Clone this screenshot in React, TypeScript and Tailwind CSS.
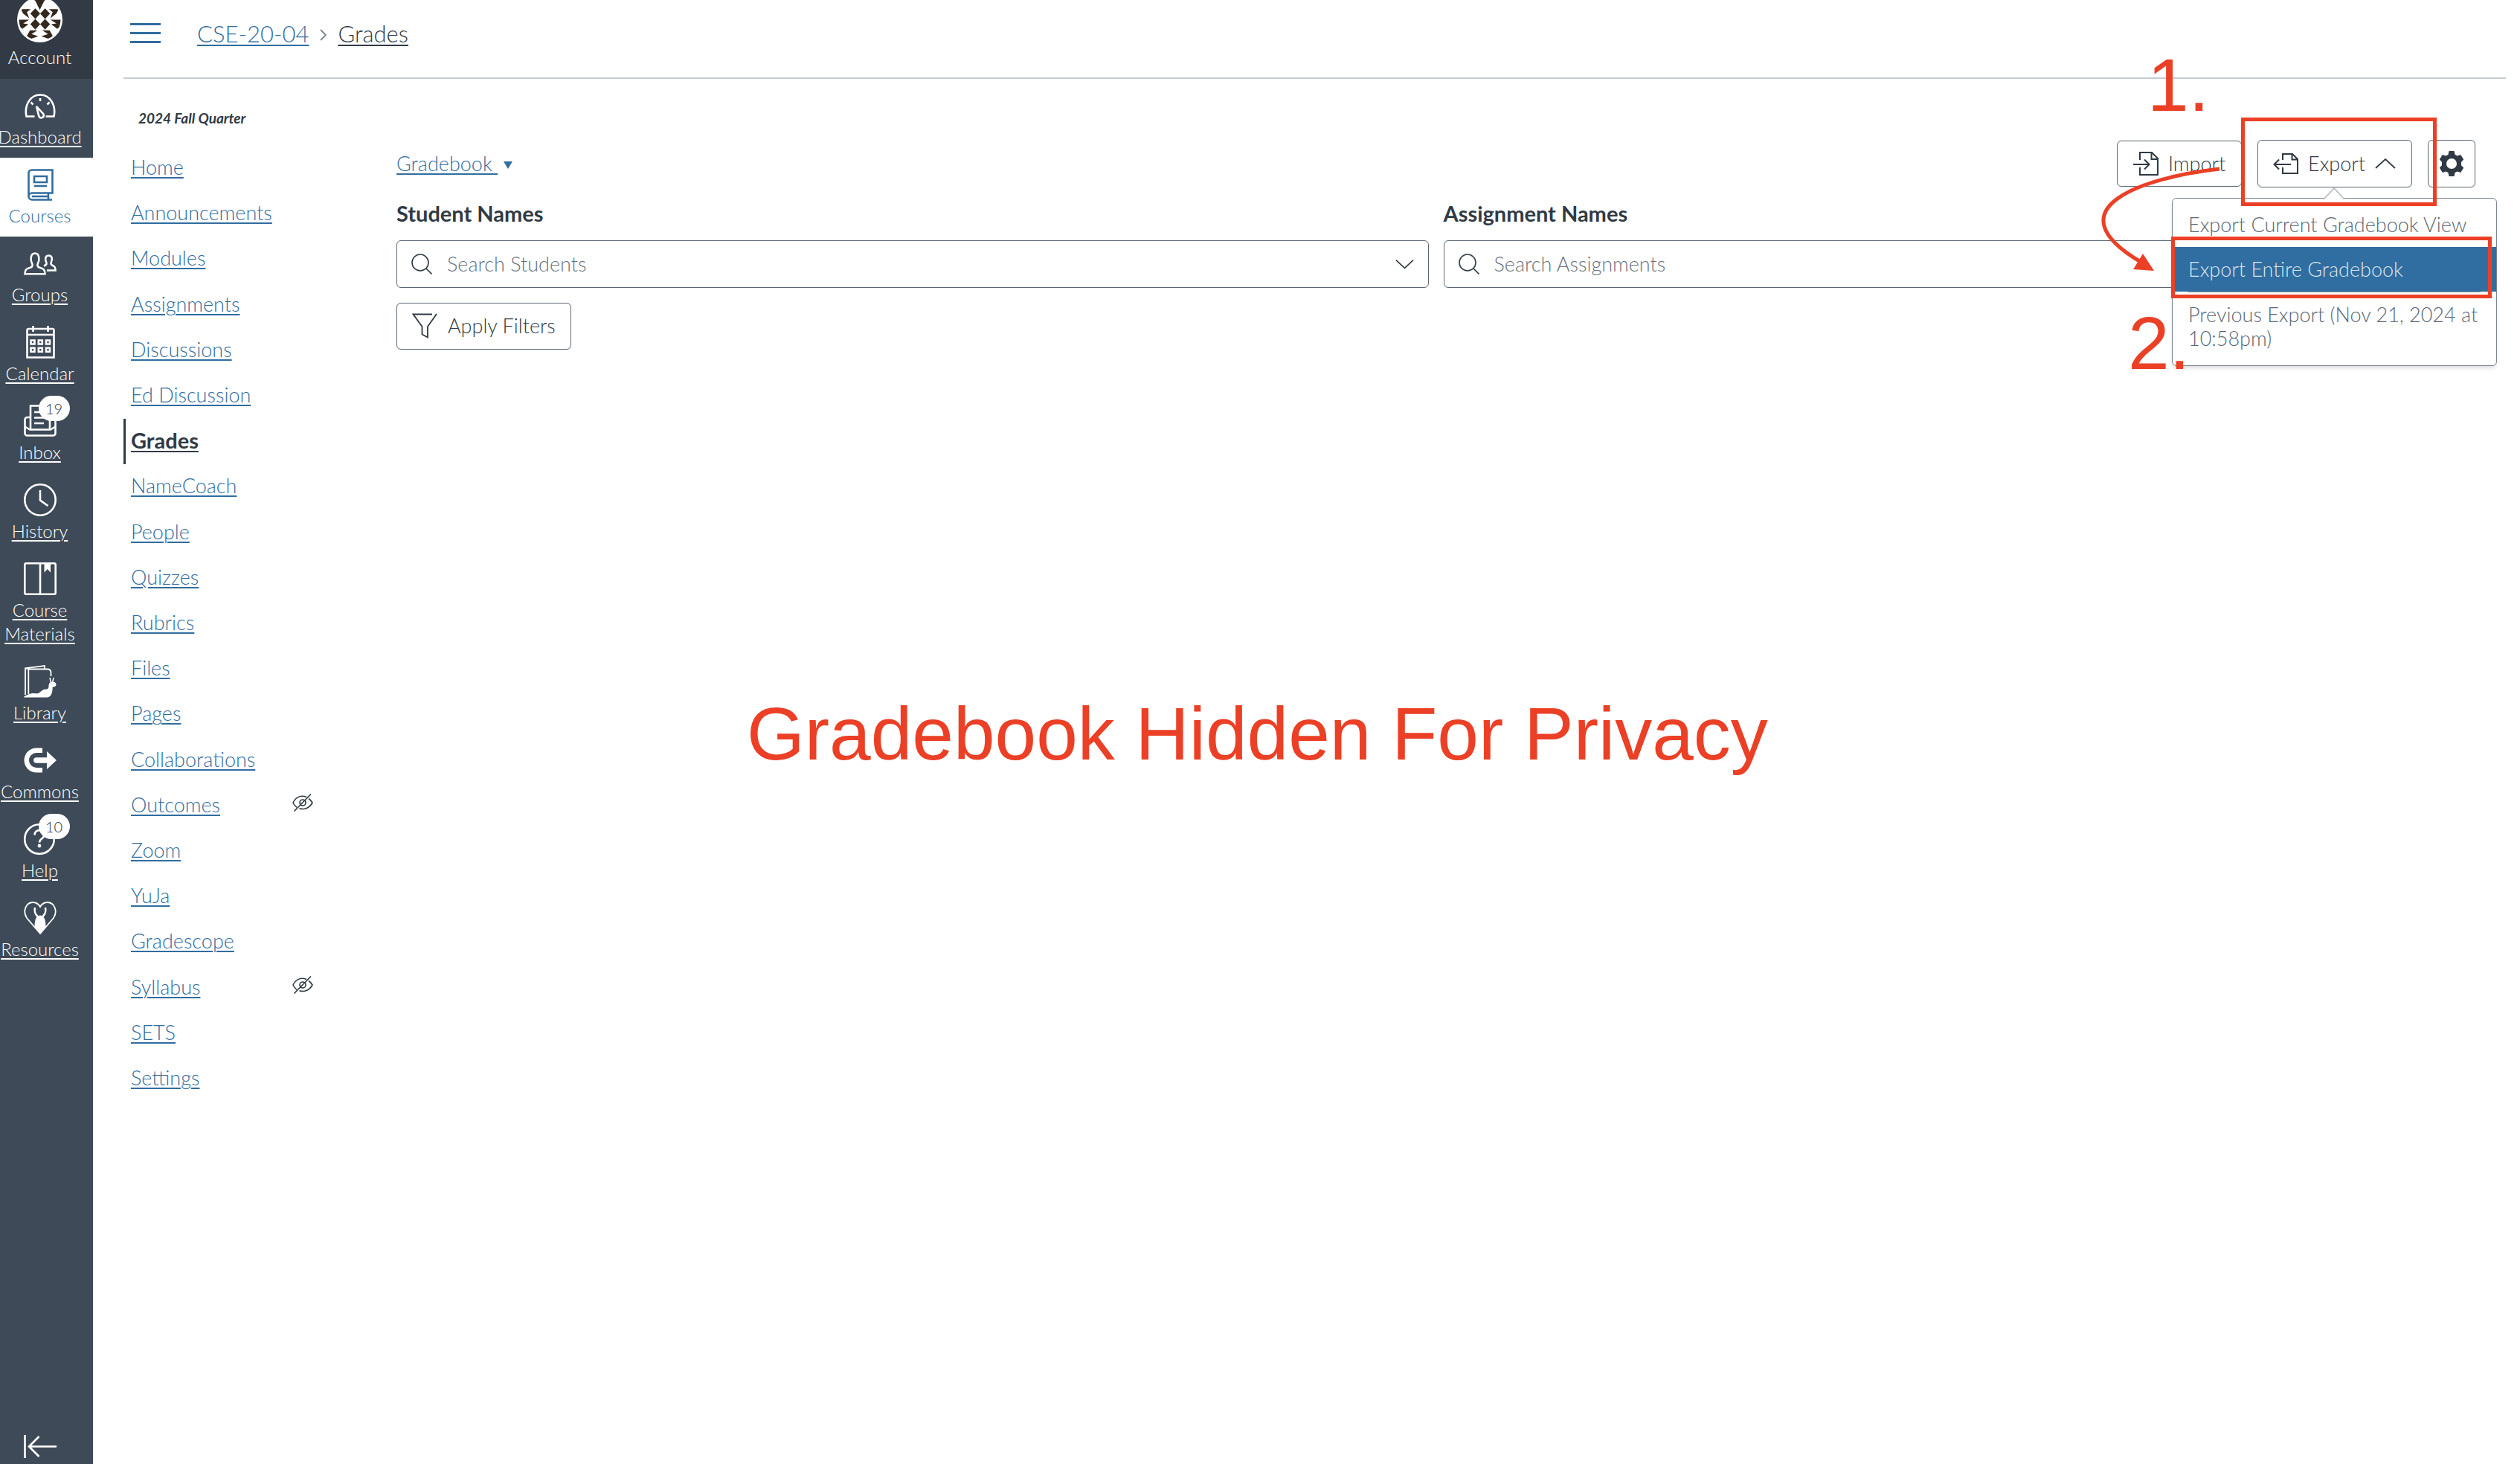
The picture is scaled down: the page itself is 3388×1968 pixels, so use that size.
import React from "react";

type IconProps = { className?: string };

const stroke = { fill: "none", stroke: "currentColor", strokeWidth: 2.6 } as const;

function Avatar() {
  return (
    <svg viewBox="0 0 60 60" className="size-[61px]" aria-hidden="true">
      <defs>
        <clipPath id="face"><circle cx="30" cy="30" r="27.500" /></clipPath>
      </defs>
      <circle cx="30" cy="30" r="30" fill="#fff" />
      <g clipPath="url(#face)" fill="#33291f">
        <path d="M17 0h26l-7 5-6 12-6-12z" />
        <path d="M24 15l6.500 7-6.500 7-6.500-7zM37 15l6.500 7-6.500 7-6.500-7zM24 29l6.500 7-6.500 7-6.500-7zM37 29l6.500 7-6.500 7-6.500-7z" />
        <path d="M5 16h13l-5 4 3 8-8-6zM55 16H42l5 4-3 8 8-6zM2 30h14l-8 5 7 1-8 6-5-4zM58 30H44l8 5-7 1 8 6 5-4z" />
        <path d="M17 44h10l-8 5 9 3-12 4-4-3zM43 44H33l8 5-9 3 12 4 4-3z" />
      </g>
    </svg>
  );
}

function DashboardIcon() {
  return (
    <svg viewBox="0 0 44 44" className="size-[44px]" {...stroke} aria-hidden="true">
      <path d="M14.500 36.500H3.500C.5 22 8 7.500 22 7.500S43.500 22 40.500 36.500h-11" />
      <path d="M22 12v4M9.500 17.500l3 3M34.500 17.500l-3 3" />
      <path d="M17 23l9.500 10.500c1.500 5-4.500 6.500-6.200 2.500z" />
    </svg>
  );
}

function CoursesIcon() {
  return (
    <svg viewBox="0 0 44 44" className="size-[44px]" {...stroke} aria-hidden="true">
      <path d="M6.500 39V6.500a4 4 0 0 1 4-4h28v31H11a4.500 4.500 0 0 0 0 9h27M33 34v8M11 38h21" />
      <path d="M14 11h17v8H14zM14 24h17" />
    </svg>
  );
}

function GroupsIcon() {
  return (
    <svg viewBox="0 0 44 44" className="size-[44px]" {...stroke} aria-hidden="true">
      <path d="M1.500 36.300c0-6 2-7 7-8.500 4-1.300 3.500-4 2.300-6.300C9 18 8.500 8.500 15 8.500s6 9.500 4.200 13c-1.200 2.300-1.700 5 2.300 6.300 5 1.500 7 2.500 7 8.500z" />
      <path d="M27 25.500c4-1.500 4-3 3-5.500-1.500-3-1.500-8.500 3.500-8.500s5 5.500 3.500 8.500c-1 2.500-.5 4 2 5s3.500 2 3.500 6.500H31" />
    </svg>
  );
}

function CalendarIcon() {
  return (
    <svg viewBox="0 0 44 44" className="size-[44px]" {...stroke} aria-hidden="true">
      <path d="M4.500 42.500V6a2 2 0 0 1 2-2h32a2 2 0 0 1 2 2v36.500zM4.500 12h36M12.500 0v8M32.500 0v8" />
      <path d="M9.500 19.500h5v5h-5zM19.800 19.500h5v5h-5zM30 19.500h5v5h-5zM9.500 29.700h5v5h-5zM19.800 29.700h5v5h-5zM30 29.700h5v5h-5z" />
    </svg>
  );
}

function InboxIcon() {
  return (
    <svg viewBox="0 0 44 44" className="size-[44px]" {...stroke} aria-hidden="true">
      <path d="M9 32.500V1.500h26v31M14 10h16M14 17.500h16M14 25h13" />
      <path d="M9 17H4.500a3 3 0 0 0-3 3v18.500a3 3 0 0 0 3 3h35a3 3 0 0 0 3-3V20a3 3 0 0 0-3-3H35M1.500 29.500l6.500 4h28l6.500-4" />
    </svg>
  );
}

function HistoryIcon() {
  return (
    <svg viewBox="0 0 44 44" className="size-[44px]" {...stroke} aria-hidden="true">
      <circle cx="22" cy="22" r="20.700" />
      <path d="M22 9v13.500l10.500 7.500" />
    </svg>
  );
}

function MaterialsIcon() {
  return (
    <svg viewBox="0 0 44 44" className="size-[44px]" {...stroke} aria-hidden="true">
      <rect x="1.300" y="1.300" width="41.400" height="41.400" rx="2" />
      <path d="M22 1v42" />
      <path d="M27.500 1h8.500v12.500l-4.200-4.500-4.300 4.500z" fill="currentColor" stroke="none" />
    </svg>
  );
}

function LibraryIcon() {
  return (
    <svg viewBox="0 0 44 44" className="size-[44px]" {...stroke} strokeWidth={1.800} aria-hidden="true">
      <path d="M2 40V4.200L28 1v3.500M6.300 39V5.500h25.200c3.200 0 5 2 5 5v4.500M2 4.200l4.300 1.300" />
      <path
        d="M.5 43.500V42c4-1.500 7-4 11-4 3 0 5 .5 7.500 0 4-1 5-5.500 10.500-5.500 3.500 0 4-2 4-4.500 0-3 1.500-5.500 5-5.500 3 0 5 1.500 5 3.800 0 2.200-2 3.200-4.800 3.200 0 7.500-1.700 14-7.700 14z"
        fill="currentColor"
        stroke="none"
      />
      <path d="M36.500 24l-1.500-7M38.500 24l1.500-7" strokeWidth="1.500" />
    </svg>
  );
}

function CommonsIcon() {
  return (
    <svg viewBox="0 0 44 44" className="size-[44px]" fill="currentColor" aria-hidden="true">
      <path d="M25 5.500v6.500h-8a10 10 0 0 0 0 20h8v6.500h-8a16.500 16.500 0 0 1 0-33z" />
      <path d="M17 18.200h14V10l13 12-13 12v-8.200H17a3.800 3.800 0 0 1 0-7.600z" />
    </svg>
  );
}

function HelpIcon() {
  return (
    <svg viewBox="0 0 44 44" className="size-[44px]" {...stroke} aria-hidden="true">
      <circle cx="21" cy="22" r="19.800" />
      <path d="M14.500 16.500c0-9 13-8 13 0 0 5-6.500 4.500-6.500 10" />
      <circle cx="21" cy="31" r="2.400" fill="currentColor" stroke="none" />
    </svg>
  );
}

function ResourcesIcon() {
  return (
    <svg viewBox="0 0 44 44" className="size-[44px]" {...stroke} strokeWidth={1.800} aria-hidden="true">
      <path d="M22 43L4 22C-2 13 3 1 12 1c5 0 8 2.500 10 6 2-3.500 5-6 10-6 9 0 14 12 8 21z" />
      <path d="M18.500 20c-4-4-4.500-7-3.500-12M25.500 20c4-4 4.500-7 3.500-12" strokeWidth="2.600" />
      <path d="M22 43l-7.500-8.500c0-6 .5-16 7.500-16s7.500 10 7.500 16z" fill="currentColor" stroke="none" />
    </svg>
  );
}

function CollapseIcon() {
  return (
    <svg viewBox="0 0 44 32" className="h-[32px] w-[44px]" {...stroke} aria-hidden="true">
      <path d="M1.500 0v31M44 15.500H8M20.500 2L7 15.500 20.500 29" />
    </svg>
  );
}

function HiddenIcon() {
  return (
    <svg viewBox="0 0 28 24" className="h-[24px] w-[28px]" fill="none" stroke="#303a44" strokeWidth="1.600" aria-hidden="true">
      <path d="M19 4.500C12 1.500 5 4 1 12c1.500 3 3 5 5 6.300M22 6.500c2 1.300 3.500 3 5 5.500-4 7.500-11 10-17.500 7.700" />
      <circle cx="14" cy="12" r="4" />
      <path d="M25 .5L2.500 23.500" />
    </svg>
  );
}

function SearchIcon() {
  return (
    <svg viewBox="0 0 28 28" className="size-[28px] shrink-0" fill="none" stroke="#303a44" strokeWidth="1.600" aria-hidden="true">
      <circle cx="12" cy="12" r="11" />
      <path d="M19.500 19.500l8 8" />
    </svg>
  );
}

function Chevron({ className }: IconProps) {
  return (
    <svg viewBox="0 0 28 14" className={className} fill="none" stroke="#303a44" strokeWidth="1.800" aria-hidden="true">
      <path d="M1 1l13 12L27 1" />
    </svg>
  );
}

function FilterIcon() {
  return (
    <svg viewBox="0 0 34 34" className="size-[34px] shrink-0" fill="none" stroke="#303a44" strokeWidth="1.800" aria-hidden="true">
      <path d="M27 1.500H1.500L13.500 18v10.500l7.500 4V18L33 1" />
    </svg>
  );
}

function ImportIcon() {
  return (
    <svg viewBox="0 0 34 32" className="h-[32px] w-[34px] shrink-0" fill="none" stroke="#303a44" strokeWidth="2" aria-hidden="true">
      <path d="M9 11V1h16l8 8v22H9V21M24.500 1v9H33M0 17h21M15 10.500l6.500 6.500-6.500 6.500" />
    </svg>
  );
}

function ExportIcon() {
  return (
    <svg viewBox="0 0 34 28" className="h-[28px] w-[34px] shrink-0" fill="none" stroke="#303a44" strokeWidth="2" aria-hidden="true">
      <path d="M13 9V1h13l7 7v19H13v-8M25.500 1v7.500H33M24 15H1M8 8.500L1.500 15 8 21.500" />
    </svg>
  );
}

function GearIcon() {
  return (
    <svg viewBox="0 0 34 34" className="size-[34px] shrink-0" aria-hidden="true">
      <path
        fillRule="evenodd"
        fill="#303a44"
        d="M13.500 0h7l1 4.800 3 1.700 4.700-1.500 4 6.500-3.200 3.300v4.400l3.200 3.300-4 6.500-4.700-1.500-3 1.700-1 4.800h-7l-1-4.800-3-1.700L4.800 29l-4-6.500L4 19.200v-4.400L.8 11.500l4-6.500 4.700 1.500 3-1.700zM17 10a7 7 0 1 0 0 14 7 7 0 0 0 0-14z"
      />
    </svg>
  );
}

const globalNav = [
  { label: "Dashboard", icon: <DashboardIcon /> },
  { label: "Courses", icon: <CoursesIcon />, active: true },
  { label: "Groups", icon: <GroupsIcon /> },
  { label: "Calendar", icon: <CalendarIcon /> },
  { label: "Inbox", icon: <InboxIcon />, badge: 19 },
  { label: "History", icon: <HistoryIcon /> },
  { label: "Course Materials", icon: <MaterialsIcon /> },
  { label: "Library", icon: <LibraryIcon /> },
  { label: "Commons", icon: <CommonsIcon /> },
  { label: "Help", icon: <HelpIcon />, badge: 10 },
  { label: "Resources", icon: <ResourcesIcon /> },
];

const courseNav = [
  "Home", "Announcements", "Modules", "Assignments", "Discussions", "Ed Discussion", "Grades",
  "NameCoach", "People", "Quizzes", "Rubrics", "Files", "Pages", "Collaborations", "Outcomes",
  "Zoom", "YuJa", "Gradescope", "Syllabus", "SETS", "Settings",
];
const hiddenPages = ["Outcomes", "Syllabus"];

function GlobalNav() {
  return (
    <nav aria-label="Global" className="flex w-[125px] shrink-0 flex-col bg-[#3e4a57] text-[24px] leading-[32px] text-white">
      <button className="flex h-[106px] flex-col items-center bg-[#323b45] pr-[18px]">
        <span className="-mt-[4px]"><Avatar /></span>
        <span className="mt-[4px]">Account</span>
      </button>
      {globalNav.map((item) => (
        <a
          key={item.label}
          href="#"
          className={
            item.active
              ? "flex flex-col items-center gap-[4px] bg-white pt-[14px] pr-[18px] pb-[12px] text-[#306da0]"
              : "flex flex-col items-center gap-[4px] pt-[14px] pr-[18px] pb-[12px] underline decoration-2 underline-offset-[3px]"
          }
        >
          <span className="relative">
            {item.icon}
            {item.badge && (
              <span className="absolute -top-[12px] left-[20px] flex h-[34px] w-[42px] items-center justify-center rounded-full bg-white text-[20px] text-[#303a44]">
                {item.badge}
              </span>
            )}
          </span>
          <span className="flex w-[107px] justify-center text-center">{item.label}</span>
        </a>
      ))}
      <button aria-label="Minimize global navigation" className="mt-auto flex justify-center pr-[18px] pb-[7px]">
        <CollapseIcon />
      </button>
    </nav>
  );
}

function CourseNav() {
  return (
    <aside className="w-[367px] shrink-0 pt-[38px]">
      <p className="mb-[22px] pl-[20px] text-[19px] leading-[30px] font-bold italic">2024 Fall Quarter</p>
      <nav aria-label="Course" className="grid min-h-[1285px] auto-rows-fr text-[27px]">
        {courseNav.map((label) => (
          <div
            key={label}
            className={
              label === "Grades"
                ? "flex items-center border-l-3 border-[#303a44] pb-[3px] pl-[7px] text-[29px] font-bold"
                : "flex items-center pb-[3px] pl-[10px] text-[#306da0]"
            }
          >
            <a href="#" className="underline decoration-2 underline-offset-[3px]">{label}</a>
            {hiddenPages.includes(label) && <span className="mr-[112px] mb-[6px] ml-auto"><HiddenIcon /></span>}
          </div>
        ))}
      </nav>
    </aside>
  );
}

function SearchField({ id, label, placeholder }: { id: string; label: string; placeholder: string }) {
  return (
    <div className="flex-1">
      <label htmlFor={id} className="block text-[29px] leading-[34px] font-bold">{label}</label>
      <div className="mt-[19px] flex h-[64px] items-center gap-[20px] rounded-[6px] border border-[#5a6773] px-[19px]">
        <SearchIcon />
        <input id={id} placeholder={placeholder} className="min-w-0 flex-1 outline-none placeholder:text-[#66727e]" />
        <Chevron className="h-[14px] w-[25px]" />
      </div>
    </div>
  );
}

const buttonStyle = "flex items-center rounded-[6px] border border-[#5a6773] bg-white";

function ExportMenu() {
  return (
    <div className="absolute top-[78px] -right-[114px] z-10 w-[437px] rounded-[6px] border border-[#7b858e] bg-white pt-[17px] pb-[2px] text-[#5a6773] shadow-md">
      <svg viewBox="0 0 28 16" className="absolute -top-[15px] left-[203px] h-[16px] w-[28px]" aria-hidden="true">
        <path d="M0 16L14 1l14 15" fill="#fff" stroke="#c0c6ca" strokeWidth="2" />
      </svg>
      <button className="block h-[48px] w-full px-[21px] pb-[12px] text-left whitespace-nowrap">Export Current Gradebook View</button>
      <div className="relative">
        <button className="block h-[60px] w-full bg-[#306da0] px-[21px] text-left text-[#dbe6ef]">Export Entire Gradebook</button>
        <div className="absolute -top-[14px] -left-[2px] h-[83px] w-[431px] border-5 border-[#eb4026]" />
      </div>
      <hr className="mx-[21px] border-[#8d979f]" />
      <button className="block w-full pt-[14px] pr-[10px] pb-[18px] pl-[21px] text-left leading-[32px]">Previous Export (Nov 21, 2024 at 10:58pm)</button>
    </div>
  );
}

function Annotations() {
  return (
    <div className="pointer-events-none absolute top-0 right-0 z-20 h-[520px] w-[560px] font-['Liberation_Sans',sans-serif] text-[100px] leading-none font-normal text-[#eb4026]">
      <span className="absolute top-[64px] left-[59px]">1.</span>
      <span className="absolute top-[411px] left-[33px]">2.</span>
      <svg viewBox="0 0 180 160" className="absolute top-[215px] left-[-10px] h-[160px] w-[180px]" aria-hidden="true">
        <path d="M166 12C60 24-60 66 60 137" fill="none" stroke="#eb4026" strokeWidth="5" />
        <path d="M78 149L63 126 50 147z" fill="#eb4026" />
      </svg>
    </div>
  );
}

export default function App() {
  return (
    <div className="relative flex min-h-screen overflow-hidden bg-white font-['Lato',sans-serif] text-[27px] leading-[32px] font-light text-[#303a44]">
      <GlobalNav />
      <div className="flex flex-1 flex-col pr-[19px] pl-[41px]">
        <header className="flex h-[106px] items-center border-b-2 border-[#c7cdd1] pb-[15px] pl-[9px] text-[31px]">
          <button aria-label="Toggle course navigation" className="flex w-[41px] flex-col gap-[9px]">
            <span className="h-[3px] bg-[#306da0]" />
            <span className="h-[3px] bg-[#306da0]" />
            <span className="h-[3px] bg-[#306da0]" />
          </button>
          <nav aria-label="Breadcrumb" className="ml-[49px] flex items-center">
            <a href="#" className="text-[#306da0] underline decoration-2 underline-offset-[3px]">CSE-20-04</a>
            <svg viewBox="0 0 9 16" className="mx-[15px] mt-[5px] h-[16px] w-[9px]" fill="none" stroke="#7b858e" strokeWidth="1.800" aria-hidden="true">
              <path d="M1 1l7 7-7 7" />
            </svg>
            <a href="#" className="underline decoration-2 underline-offset-[3px]">Grades</a>
          </nav>
        </header>
        <div className="flex flex-1">
          <CourseNav />
          <main className="flex-1 pr-[41px]">
            <div className="flex items-start justify-between pt-[82px]">
              <button className="mt-[16px] flex items-center gap-[8px] text-[#306da0]">
                <span className="whitespace-pre underline decoration-2 underline-offset-[3px]">{"Gradebook "}</span>
                <svg viewBox="0 0 12 10" className="mt-[4px] h-[10px] w-[12px]" fill="#306da0" aria-hidden="true"><path d="M0 0h12L6 10z" /></svg>
              </button>
              <div className="flex items-center gap-[21px]">
                <button className={buttonStyle + " h-[62px] w-[168px] gap-[13px] pl-[21px]"}><ImportIcon />Import</button>
                <div className="relative">
                  <button aria-expanded="true" className={buttonStyle + " h-[64px] w-[208px] gap-[13px] pl-[20px]"}>
                    <ExportIcon />Export<Chevron className="h-[14px] w-[28px] rotate-180" />
                  </button>
                  <div className="absolute -top-[30px] -left-[22px] z-20 h-[119px] w-[263px] border-5 border-[#eb4026]" />
                  <ExportMenu />
                </div>
                <button aria-label="Gradebook settings" className={buttonStyle + " h-[64px] w-[64px] justify-center"}><GearIcon /></button>
              </div>
            </div>
            <div className="mt-[18px] flex gap-[20px]">
              <SearchField id="students" label="Student Names" placeholder="Search Students" />
              <SearchField id="assignments" label="Assignment Names" placeholder="Search Assignments" />
            </div>
            <button className={buttonStyle + " mt-[20px] h-[63px] gap-[14px] px-[20px] pb-[2px]"}><FilterIcon />Apply Filters</button>
            <p className="mt-[460px] ml-[471px] font-['Liberation_Sans',sans-serif] text-[100px] leading-[112px] font-normal whitespace-nowrap text-[#eb4026]">
              Gradebook Hidden For Privacy
            </p>
          </main>
        </div>
      </div>
      <Annotations />
    </div>
  );
}
